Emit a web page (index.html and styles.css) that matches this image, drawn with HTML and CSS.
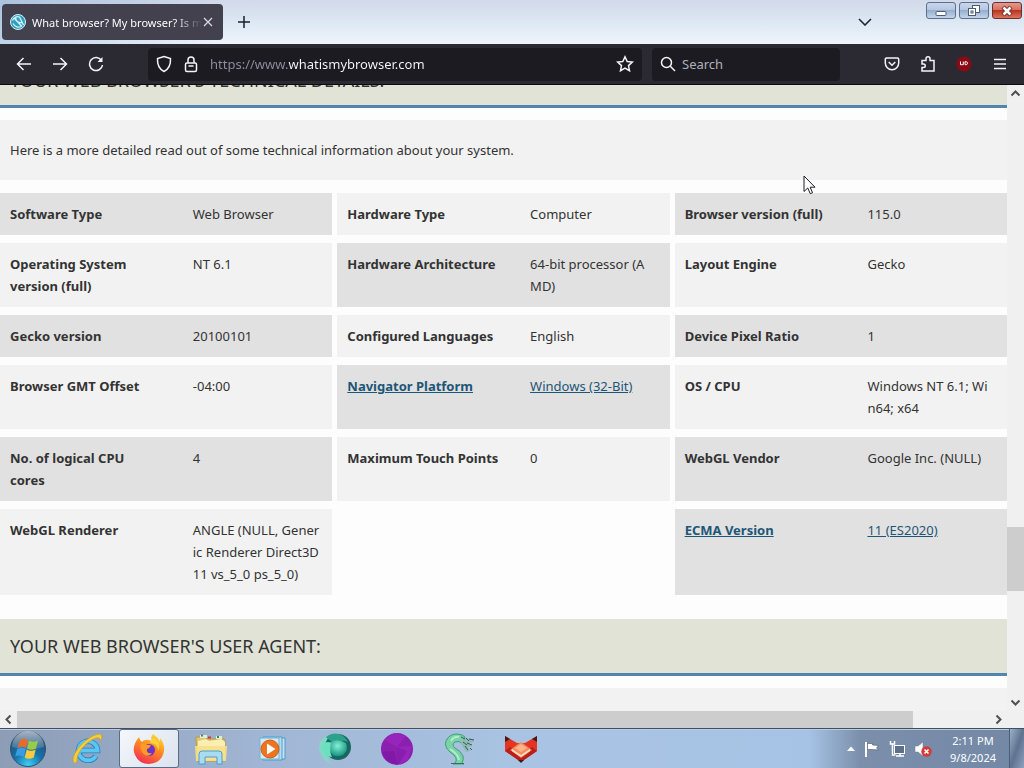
FILE: index.html
```
<!DOCTYPE html>
<html lang="en">
<head>
    <meta charset="UTF-8">
    <meta name="viewport" content="width=device-width, initial-scale=1.0">
    <title>What browser? My browser? Is my browser out of date?</title>
    <link rel="stylesheet" href="styles.css">
</head>
<body>
    <div class="desktop">
        <!-- Title bar with tabs -->
        <header class="titlebar">
            <div class="tab">
                <svg class="tab-icon" width="16" height="16" viewBox="0 0 16 16">
                    <circle cx="8" cy="8" r="7.5" fill="#2d9fc0" stroke="#d9f3fa"/>
                    <path d="M2.5 6.5c1-3 4-4.500 7-3.500l4 8M4 4l8 8.500M3 9.500c2 4 6 4 8 3M6 3.500c-1 3 2 6 6.500 5" fill="none" stroke="#d9f3fa" stroke-width="1.300"/>
                </svg>
                <span class="tab-title">What browser? My browser? Is m</span>
                <button class="tab-close" aria-label="Close tab">
                    <svg width="10" height="10" viewBox="0 0 10 10"><path d="M1 1l8 8M9 1l-8 8" stroke="#d8d8df" stroke-width="1.300"/></svg>
                </button>
            </div>
            <button class="new-tab" aria-label="New tab">
                <svg width="12" height="12" viewBox="0 0 12 12"><path d="M6 0v12M0 6h12" stroke="#1b2028" stroke-width="1.500"/></svg>
            </button>
            <button class="tab-list" aria-label="List all tabs">
                <svg width="14" height="8" viewBox="0 0 14 8"><path d="M1 1l6 6 6-6" fill="none" stroke="#1f2732" stroke-width="1.600"/></svg>
            </button>
            <div class="window-buttons">
                <button class="win-btn" aria-label="Minimize">
                    <svg width="12" height="12" viewBox="0 0 12 12"><rect x="1" y="6.500" width="10" height="4" rx="1" fill="#fff" stroke="#4c5c74"/></svg>
                </button>
                <button class="win-btn" aria-label="Restore">
                    <svg width="12" height="12" viewBox="0 0 12 12" fill="#fff" stroke="#4c5c74"><rect x="4.500" y=".5" width="7" height="7"/><rect x=".5" y="3.500" width="7" height="7"/><rect x="3" y="6" width="2" height="2"/></svg>
                </button>
                <button class="win-btn win-close" aria-label="Close">
                    <svg width="12" height="12" viewBox="0 0 12 12"><path d="M2 2l8 8M10 2l-8 8" stroke="#6d2b28" stroke-width="4.500"/><path d="M2.500 2.500l7 7M9.500 2.500l-7 7" stroke="#fff" stroke-width="2.600"/></svg>
                </button>
            </div>
        </header>

        <!-- Navigation toolbar -->
        <nav class="toolbar">
            <div class="tool-group">
                <button class="tool" aria-label="Back">
                    <svg width="16" height="16" viewBox="0 0 16 16"><path d="M15 8H1.500M7.500 2l-6 6 6 6"/></svg>
                </button>
                <button class="tool" aria-label="Forward">
                    <svg width="16" height="16" viewBox="0 0 16 16"><path d="M1 8h13.500M8.500 2l6 6-6 6"/></svg>
                </button>
                <button class="tool" aria-label="Reload">
                    <svg width="16" height="16" viewBox="0 0 16 16"><path d="M13.500 4.500a6.500 6.500 0 1 0 1 4.500"/><path d="M14.500 1v5h-5z" fill="#f4f4f8" stroke="none"/></svg>
                </button>
            </div>
            <div class="urlbar">
                <svg width="16" height="18" viewBox="0 0 16 18"><path d="M8 1.500l6.500 2c.3 6-1.500 10.500-6.500 13-5-2.500-6.800-7-6.500-13z"/></svg>
                <svg width="14" height="18" viewBox="0 0 14 18"><rect x="1.500" y="8" width="11" height="8.500" rx="1.500"/><path d="M4 8V5a3 3 0 0 1 6 0v3M4.500 11h5" /></svg>
                <input class="url-input" type="text" aria-label="Address" value="https://www.whatismybrowser.com">
                <button class="star" aria-label="Bookmark this page">
                    <svg width="18" height="18" viewBox="0 0 18 18"><path d="M9 1.800l2.200 4.700 5.100.6-3.800 3.500 1 5.100L9 13.200l-4.500 2.500 1-5.100L1.700 7.100l5.100-.6z"/></svg>
                </button>
            </div>
            <div class="searchbar">
                <svg width="16" height="16" viewBox="0 0 16 16"><circle cx="6.500" cy="6.500" r="5"/><path d="M10.300 10.300L15 15"/></svg>
                <input class="search-input" type="text" aria-label="Search" placeholder="Search">
            </div>
            <div class="tool-group">
                <button class="tool" aria-label="Save to Pocket">
                    <svg width="16" height="16" viewBox="0 0 16 16"><path d="M2.500 2h11q1.200 0 1.200 1.200V7a6.700 6.700 0 0 1-13.400 0V3.200Q1.300 2 2.500 2zM4.700 6L8 9.200 11.300 6"/></svg>
                </button>
                <button class="tool" aria-label="Extensions">
                    <svg width="16" height="18" viewBox="0 0 16 18"><path d="M2 5.500h4V3.800a2 2 0 0 1 4 0v1.700h4V16H2v-3.500h1.500a1.700 1.700 0 0 0 0-3.500H2z"/></svg>
                </button>
                <button class="tool" aria-label="Ad blocker">
                    <svg width="16" height="16" viewBox="0 0 16 16"><circle cx="8" cy="8" r="7.500" fill="#8b0a14" stroke="none"/><path d="M4.500 5.500v3.200h2.800V5.500M9 5.700h1.200q1.300.2 1.300 1.500t-1.300 1.500H9z" stroke-width="1"/></svg>
                </button>
                <button class="tool" aria-label="Open menu">
                    <svg width="14" height="12" viewBox="0 0 14 12"><path d="M1 1.500h12M1 6h12M1 10.500h12"/></svg>
                </button>
            </div>
        </nav>

        <!-- Page -->
        <div class="viewport">
            <main class="page">
                <h2 class="section-title section-title-first">Your web browser's technical details:</h2>
                <p class="intro">Here is a more detailed read out of some technical information about your system.</p>
                <dl class="details">
                    <div class="detail dark"><dt>Software Type</dt><dd>Web Browser</dd></div>
                    <div class="detail"><dt>Hardware Type</dt><dd>Computer</dd></div>
                    <div class="detail dark"><dt>Browser version (full)</dt><dd>115.0</dd></div>
                    <div class="detail"><dt>Operating System version (full)</dt><dd>NT 6.1</dd></div>
                    <div class="detail dark"><dt>Hardware Architecture</dt><dd>64-bit processor (A<br>MD)</dd></div>
                    <div class="detail"><dt>Layout Engine</dt><dd>Gecko</dd></div>
                    <div class="detail dark"><dt>Gecko version</dt><dd>20100101</dd></div>
                    <div class="detail"><dt>Configured Languages</dt><dd>English</dd></div>
                    <div class="detail dark"><dt>Device Pixel Ratio</dt><dd>1</dd></div>
                    <div class="detail"><dt>Browser GMT Offset</dt><dd>-04:00</dd></div>
                    <div class="detail dark"><dt><a href="#">Navigator Platform</a></dt><dd><a href="#">Windows (32-Bit)</a></dd></div>
                    <div class="detail"><dt>OS / CPU</dt><dd>Windows NT 6.1; Wi<br>n64; x64</dd></div>
                    <div class="detail dark"><dt>No. of logical CPU<br>cores</dt><dd>4</dd></div>
                    <div class="detail"><dt>Maximum Touch Points</dt><dd>0</dd></div>
                    <div class="detail dark"><dt>WebGL Vendor</dt><dd>Google Inc. (NULL)</dd></div>
                    <div class="detail"><dt>WebGL Renderer</dt><dd>ANGLE (NULL, Generic Renderer Direct3D11 vs_5_0 ps_5_0)</dd></div>
                    <div class="detail dark last-column"><dt><a href="#">ECMA Version</a></dt><dd><a href="#">11 (ES2020)</a></dd></div>
                </dl>
                <h2 class="section-title">Your web browser's user agent:</h2>
                <div class="panel"></div>
            </main>
            <div class="scroll-y">
                <svg width="17" height="17" viewBox="0 0 17 17"><path d="M4.500 10.500l4-4 4 4"/></svg>
                <div class="thumb-y"></div>
                <svg width="17" height="17" viewBox="0 0 17 17"><path d="M4.500 6.500l4 4 4-4"/></svg>
            </div>
            <div class="scroll-x">
                <svg width="17" height="17" viewBox="0 0 17 17"><path d="M10.500 4.500l-4 4 4 4"/></svg>
                <div class="thumb-x"></div>
                <svg width="17" height="17" viewBox="0 0 17 17"><path d="M6.500 4.500l4 4-4 4"/></svg>
            </div>
            <div class="corner"></div>
        </div>

        <!-- Taskbar -->
        <footer class="taskbar">
            <button class="start" aria-label="Start">
                <svg width="38" height="38" viewBox="0 0 38 38">
                    <defs>
                        <radialGradient id="orb" cx=".5" cy=".95" r=".9"><stop offset="0" stop-color="#3fd0f5"/><stop offset=".45" stop-color="#1672ac"/><stop offset="1" stop-color="#284a6c"/></radialGradient>
                        <linearGradient id="shine" x2="0" y2="1"><stop offset="0" stop-color="#fff" stop-opacity=".6"/><stop offset="1" stop-color="#fff" stop-opacity=".1"/></linearGradient>
                    </defs>
                    <circle cx="19" cy="19" r="17.500" fill="url(#orb)" stroke="#33536f"/>
                    <path d="M3 17a16 16 0 0 1 32 0q-16 5-32 0z" fill="url(#shine)"/>
                    <path d="M11 10q4-2.500 8 0l-2 8q-4-2.500-8.500 0z" fill="#ea6a2c"/>
                    <path d="M20 10.500q4 2.500 9 0l-2 8q-5 2.500-9 0z" fill="#9bcb45"/>
                    <path d="M8.200 19q4-2.500 8.500 0l-2 8q-4-2.500-8.500-.5z" fill="#3b9ce2"/>
                    <path d="M17.700 19.500q4 2.500 9 0l-2 8q-5 2.500-9 0z" fill="#fbc93c"/>
                </svg>
            </button>
            <button class="task" aria-label="Internet Explorer">
                <svg width="32" height="32" viewBox="0 0 32 32">
                    <path d="M9 17.500h17.500a9.500 9.500 0 1 0-1.500 5.500" fill="none" stroke="#1e7fc0" stroke-width="5.500"/>
                    <path d="M9 17.500h17.500a9.500 9.500 0 1 0-1.500 5.500" fill="none" stroke="#5cc5f0" stroke-width="4"/>
                    <path d="M3 30C-2 23 15 2 29 1q3 1 1 7-1-4-5-3C14 9 5 21 6 28q-1 3-3 2z" fill="#f5cd3a" stroke="#c9981e" stroke-width=".6"/>
                </svg>
            </button>
            <button class="task task-active" aria-label="Firefox">
                <svg width="32" height="32" viewBox="0 0 32 32">
                    <defs><linearGradient id="fox" x1=".8" y1="0" x2=".3" y2="1"><stop offset="0" stop-color="#ffe03b"/><stop offset=".45" stop-color="#ff8b20"/><stop offset="1" stop-color="#f02e55"/></linearGradient></defs>
                    <path d="M20 1q-3 3-1 7-7-3-10 1Q7 8 6 4-2 14 2 22q4 9 14 9 13-1 15-13 1-7-4-13 0 3 0 4-2-5-7-8z" fill="url(#fox)"/>
                    <circle cx="16" cy="17" r="6" fill="#6b35c8"/>
                    <path d="M8 11q4-2 6 1h4q-1 3-4 4-1 5 5 4-3 4-7 2-6-4-4-11z" fill="#ff9a24"/>
                    <path d="M17 10q8 0 8 8 4-10-5-13z" fill="#ffd43a"/>
                </svg>
            </button>
            <button class="task" aria-label="Windows Explorer">
                <svg width="34" height="32" viewBox="0 0 34 32">
                    <path d="M2 5q0-1 1-1h8l2 2h17q1 0 1 1v21H3z" fill="#e3c66e" stroke="#b99843"/>
                    <path d="M4 8l8-2 3 2 12-2 4 3v17l-27 2z" fill="#fbeeb0"/>
                    <path d="M6 2h7v3H6zM22 3h6v3h-6z" fill="#dff0d2"/><path d="M7 2.500h2M23 4h2" stroke="#3c8c54" stroke-width="2"/><path d="M14 4.500h3" stroke="#cc3b32" stroke-width="2"/>
                    <path d="M1 13h32l-1 15H2z" fill="#f7df8a" opacity=".9"/>
                    <path d="M5 31V21q0-3 3-3h17q3 0 3 3v10h-5v-7H11v7z" fill="#a9dcf4" stroke="#4d9ecb"/>
                </svg>
            </button>
            <button class="task" aria-label="Windows Media Player">
                <svg width="30" height="30" viewBox="0 0 30 30">
                    <path d="M8 4h19v21H8z" fill="#c6e2f3" stroke="#4e9cc9"/>
                    <path d="M5 3h19v23H5z" fill="#b8dcf0" stroke="#4e9cc9"/>
                    <path d="M2 4h19v21H2z" fill="#d7eaf4" stroke="#6fb3d6"/>
                    <circle cx="12" cy="15" r="9" fill="#ee7420" stroke="#cf5d15"/>
                    <path d="M9 9.500l8.500 5.500L9 20.500z" fill="#fff"/>
                </svg>
            </button>
            <button class="task" aria-label="Green browser">
                <svg width="34" height="34" viewBox="0 0 34 34">
                    <defs><radialGradient id="globe" cx=".45" cy=".35" r=".7"><stop offset="0" stop-color="#83f2d3"/><stop offset="1" stop-color="#108a7c"/></radialGradient></defs>
                    <path d="M9 4Q-2 9 2 20q4 11 13 12-7-4-6-13z" fill="#82d9c3"/>
                    <circle cx="20" cy="15" r="13" fill="#17675f"/>
                    <path d="M8 5q6-5 13-3 6 2 9 8-7-3-13 1-7-3-9-6z" fill="#2aa28c"/>
                    <path d="M12 10q8-4 16 1 3 7-3 12-10 4-13-4z" fill="url(#globe)"/>
                    <path d="M3 15q5-7 10-4-2 8 1 14-8 0-11-10z" fill="#6be0c1"/>
                </svg>
            </button>
            <button class="task" aria-label="Purple browser">
                <svg width="34" height="34" viewBox="0 0 34 34">
                    <circle cx="17" cy="17" r="16" fill="#8b1fae"/>
                    <path d="M4 8L14 1l12 3-9 11zM17 15l15-1-4 14-8 5z" fill="#a52cc8" opacity=".5"/>
                    <path d="M2 20l12-1 4 14Q5 31 2 20zM17 15l10 4-8 12z" fill="#7212a1" opacity=".4"/>
                </svg>
            </button>
            <button class="task" aria-label="Serpent">
                <svg width="32" height="32" viewBox="0 0 32 32">
                    <path d="M10 31q4-1 3-6-1-3-6-6-6-5-4-11Q6 1 14 1q5 0 8 3l-2 7q-4-4-8-2-4 3 0 6 6 3 8 8 1 4-1 7l2 1z" fill="#79d3a7" stroke="#3f9f79"/>
                    <path d="M8 8q3-5 8-4M7 16q8 5 9 11" fill="none" stroke="#b3ecce" stroke-width="2"/>
                    <path d="M19 5l10 1 2 3-5 1 3 3-4 1 2 4-4 1-5-8z" fill="#8fb9b5"/>
                    <path d="M18 4l4 2M23 5l3 3M20 9l4 3M26 6l5 1M24 10l5 2M22 13l3 4M27 15l2 2" stroke="#315c5c"/>
                    <path d="M8 30.500h13" stroke="#2f7558"/>
                </svg>
            </button>
            <button class="task" aria-label="Red fox browser">
                <svg width="34" height="28" viewBox="0 0 34 28">
                    <path d="M1 1l12 7h8l12-7v15L17 27 1 16z" fill="#e33521"/>
                    <path d="M1 1l5 3-5 3zM33 1l-5 3 5 3z" fill="#431b20"/>
                    <path d="M1 16l5-4 11 8 11-8 5 4-16 11z" fill="#b91f1a"/>
                    <path d="M6 15l11-8 11 8-11 8z" fill="#f58b62"/>
                    <path d="M11 13l6-4 6 4-6 4z" fill="#f9b48c"/>
                    <path d="M8 14l9 6 9-6v2l-9 6-9-6z" fill="#ffe0c0"/>
                    <path d="M14 25h6l-3 3z" fill="#3f171b"/>
                </svg>
            </button>
            <div class="tray">
                <svg width="8" height="5" viewBox="0 0 8 5"><path d="M0 5l4-4.500L8 5z" fill="#fff"/></svg>
                <svg width="16" height="16" viewBox="0 0 16 16"><path d="M2 1v15" stroke="#fff" stroke-width="2"/><path d="M3.500 2.500h5v1.500l6 .5-2 2.500 2 2-6-.5H3.500z" fill="#fff" stroke="#46566d" stroke-width=".6"/></svg>
                <svg width="16" height="16" viewBox="0 0 16 16"><rect x="5.500" y="4.500" width="10" height="8" fill="#5d7087" stroke="#fff"/><path d="M7 15h8M11 12v3M1.500 0v3h4V0M3.500 3v11h3" fill="none" stroke="#fff" stroke-width="1.500"/></svg>
                <svg width="18" height="16" viewBox="0 0 18 16"><path d="M1 5h3l5-4v14l-5-4H1z" fill="#fff" stroke="#6b7b90" stroke-width=".5"/><circle cx="12.500" cy="10.500" r="5.200" fill="#d23b38"/><path d="M10.500 8.500l4 4M14.500 8.500l-4 4" stroke="#fff" stroke-width="1.600"/></svg>
            </div>
            <div class="clock">
                <span>2:11 PM</span>
                <span>9/8/2024</span>
            </div>
            <button class="show-desktop" aria-label="Show desktop"></button>
        </footer>

        <svg class="cursor" width="13" height="20" viewBox="0 0 13 20"><path d="M1 1v15.500l3.700-3.500 2.600 5.700 2.300-1-2.500-5.500H12z" fill="#fff" stroke="#1c1c2a"/></svg>
    </div>
</body>
</html>
```
FILE: styles.css
```
* {
    box-sizing: border-box;
}
body {
    margin: 0;
    font-family: "Noto Sans", "Open Sans", sans-serif;
    font-size: 13px;
    color: #333;
}
button {
    display: flex;
    align-items: center;
    justify-content: center;
    padding: 0;
    border: 0;
    background: none;
}
input {
    min-width: 0;
    flex: 1;
    padding: 0;
    border: 0;
    background: none;
    font-family: "Noto Sans", sans-serif;
    font-size: 13px;
    color: #fbfbfe;
}
svg {
    flex: none;
}
.desktop {
    position: relative;
    display: flex;
    flex-direction: column;
    height: 100vh;
    overflow: hidden;
}

/* Title bar */
.titlebar {
    display: flex;
    height: 44px;
    padding: 4px 2px;
    background: linear-gradient(to right, rgba(112, 160, 205, 0.4), transparent 22%), linear-gradient(#d2d9e9, #dce8f3 50%, #f0f4fc);
}
.tab {
    display: flex;
    align-items: center;
    width: 221px;
    height: 36px;
    padding: 0 10px 0 8px;
    border-radius: 4px;
    background: #42414d;
}
.tab-title {
    flex: 1;
    margin-left: 6px;
    white-space: nowrap;
    font-size: 11px;
    color: #fbfbfe;
    -webkit-mask-image: linear-gradient(to right, #000 84%, transparent);
    mask-image: linear-gradient(to right, #000 84%, transparent);
}
.tab-close {
    width: 12px;
    height: 16px;
}
.new-tab {
    width: 42px;
    height: 36px;
}
.tab-list {
    width: 36px;
    height: 36px;
    margin-left: auto;
}
.window-buttons {
    display: flex;
    gap: 3px;
    margin: -2px 0 0 43px;
}
.win-btn {
    width: 30px;
    height: 17px;
    border: 1px solid #5c6f8c;
    border-radius: 3px;
    background: linear-gradient(#c8d6ea, #b3c6e0 50%, #96aed0 50%, #c3d5ea);
}
.win-close {
    border-color: #6b2f31;
    background: linear-gradient(#e59a8c, #d36d5c 50%, #bb3420 50%, #dc755a);
}

/* Toolbar */
.toolbar {
    display: flex;
    align-items: center;
    height: 41px;
    padding: 0 6px;
    border-bottom: 1px solid #0c0c0d;
    background: #2b2a33;
}
.toolbar svg {
    fill: none;
    stroke: #f4f4f8;
    stroke-width: 1.5;
}
.tool-group {
    display: flex;
}
.tool {
    width: 36px;
    height: 32px;
}
.urlbar,
.searchbar {
    display: flex;
    align-items: center;
    height: 33px;
    padding: 0 8px;
    border-radius: 4px;
    background: #1c1b22;
}
.urlbar {
    flex: 1;
    gap: 12px;
    margin: 0 10px 0 34px;
}
.searchbar {
    gap: 6px;
    width: 188px;
    margin-right: 34px;
}
/* Scheme and subdomain are dimmed, the domain is bright */
.url-input {
    background: linear-gradient(to right, #8f8f9d 78px, #fbfbfe 78px);
    -webkit-background-clip: text;
    background-clip: text;
    color: transparent;
}
.search-input::placeholder {
    color: #b0b0ba;
}

/* Page */
.viewport {
    display: grid;
    flex: 1;
    grid-template-columns: 1fr 17px;
    grid-template-rows: 1fr 17px;
    min-height: 0;
}
.page {
    min-height: 0;
    overflow: hidden;
    background: #fdfdfd;
}
.section-title {
    margin: 24px 0 12px;
    padding: 14px 10px;
    border-bottom: 3px solid #5086ac;
    background: #e1e3d7;
    font-size: 18px;
    font-weight: 400;
    line-height: 26px;
    text-transform: uppercase;
}
/* Mostly scrolled out of view */
.section-title-first {
    margin-top: -32px;
    padding-bottom: 12px;
}
.intro {
    margin: 0 0 13px;
    padding: 19px 10px;
    background: #f2f2f2;
    line-height: 22px;
}
.details {
    display: grid;
    grid-template-columns: repeat(3, 1fr);
    gap: 8px 5px;
    margin: 0;
    line-height: 22px;
}
.detail {
    display: grid;
    grid-template-columns: 55% 45%;
    padding: 10px 0;
    background: #f2f2f2;
}
.detail.dark {
    background: #e1e1e1;
}
.last-column {
    grid-column: 3;
}
.detail dt {
    padding: 0 15px 0 10px;
    font-weight: 700;
}
.detail dd {
    margin: 0;
    padding: 0 10px;
    word-break: break-all;
}
.detail a {
    color: #1d5676;
}
.panel {
    height: 100px;
    background: #f2f2f2;
}

/* Scrollbars */
.scroll-y,
.scroll-x,
.corner {
    display: flex;
    background: #f0f0f0;
}
.scroll-y {
    flex-direction: column;
}
.scroll-y svg,
.scroll-x svg {
    fill: none;
    stroke: #505050;
    stroke-width: 2;
}
.thumb-y {
    height: 64px;
    margin-top: auto;
    margin-bottom: 103px;
    background: #cdcdcd;
}
.thumb-x {
    width: 89%;
    margin-right: auto;
    background: #cdcdcd;
}

/* Taskbar */
.taskbar {
    display: flex;
    height: 40px;
    border-top: 1px solid #3f4f68;
    background: linear-gradient(to right, #8c9db5, #a0b5d3 25%, #a9c3e3 50%, #a6c3e5 79%, #7b8fab 84%, #7388a5);
    box-shadow: inset 0 1px #bccce0;
}
.start {
    width: 56px;
}
.task {
    width: 62px;
}
.task-active {
    width: 60px;
    margin: 0 1px;
    border: 1px solid #5b6b84;
    border-radius: 3px;
    background: linear-gradient(135deg, #f4f7fb, #dbe3ef);
}
.tray {
    display: flex;
    align-items: center;
    gap: 9px;
    margin-left: auto;
}
.clock {
    display: flex;
    flex-direction: column;
    justify-content: center;
    width: 72px;
    margin-left: 5px;
    font-size: 11px;
    line-height: 17px;
    text-align: center;
    color: #fff;
}
.show-desktop {
    width: 15px;
    border-left: 1px solid #4d5f78;
    background: linear-gradient(to bottom right, #9db0c8, #5d738f 50%, #8ea2bc);
}

/* Mouse pointer */
.cursor {
    position: absolute;
    left: 803px;
    top: 175px;
}
```
